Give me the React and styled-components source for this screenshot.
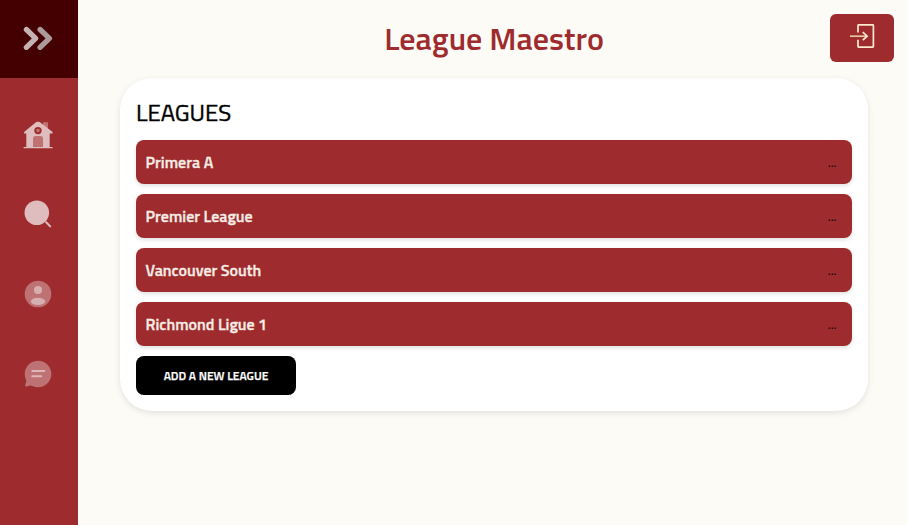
import React from "react";
import styled, { createGlobalStyle } from "styled-components";

const GlobalStyle = createGlobalStyle`
  *, *::before, *::after { box-sizing: border-box; }
  body {
    margin: 0;
    background: #fdfbf6;
    font-family: "Titillium Web", Roboto, "Noto Sans", sans-serif;
  }
  h1, h2, ul { margin: 0; padding: 0; }
  button { font-family: inherit; border: 0; cursor: pointer; }
`;

const Page = styled.div`
  display: flex;
  height: 100vh;
  overflow: hidden;
`;

const Sidebar = styled.aside`
  flex: 0 0 78px;
  display: flex;
  flex-direction: column;
  background: #9e2b2e;
`;

const SidebarToggle = styled.button`
  display: flex;
  height: 78px;
  padding: 22px;
  background: #440000;
`;

const Nav = styled.nav`
  display: flex;
  flex-direction: column;
  gap: 48px;
  padding: 40px 22px 0;
`;

const NavButton = styled.button`
  display: flex;
  width: 32px;
  height: 32px;
  padding: 0;
  background: none;
`;

const Icon = styled.svg`
  display: block;
  flex: none;
  width: ${({ $size = 32 }) => $size}px;
  height: ${({ $size = 32 }) => $size}px;
`;

const Main = styled.main`
  flex: 1;
  min-width: 0;
`;

const Header = styled.header`
  display: grid;
  grid-template-columns: 64px 1fr 64px;
  align-items: center;
  height: 78px;
  padding: 0 13px 2px 16px;
`;

const Title = styled.h1`
  grid-column: 2;
  text-align: center;
  color: #9e2b2e;
  font-size: 32px;
  line-height: 48px;
  font-weight: 600;
`;

const LogoutButton = styled.button`
  display: flex;
  justify-content: center;
  width: 64px;
  height: 48px;
  padding: 8px 0;
  border-radius: 6px;
  background: #9e2b2e;
`;

const Card = styled.section`
  width: 748px;
  height: 333px;
  margin-left: 42px;
  padding: 16px;
  border-radius: 32px;
  background: #fff;
  box-shadow: 0 2px 6px rgba(0, 0, 0, 0.1);
`;

const CardTitle = styled.h2`
  height: 46px;
  color: #000;
  font-size: 24px;
  line-height: 36px;
  font-weight: 400;
  -webkit-text-stroke: 0.4px #000;
`;

const LeagueList = styled.ul`
  display: flex;
  flex-direction: column;
  gap: 10px;
  list-style: none;
`;

const LeagueRow = styled.li`
  display: flex;
  align-items: center;
  justify-content: space-between;
  height: 44px;
  padding: 0 15.6px 0 9.6px;
  border-radius: 8px;
  background: #9e2b2e;
  box-shadow: 0 2px 4px rgba(0, 0, 0, 0.12);
`;

const LeagueName = styled.span`
  color: #f5ece4;
  font-size: 16px;
  line-height: 24px;
  font-weight: 600;
  -webkit-text-stroke: 0.3px #f5ece4;
`;

const MoreButton = styled.button`
  padding: 0;
  background: none;
  color: #000;
  font-size: 13.333px;
  line-height: 20px;
`;

const AddButton = styled.button`
  width: 160px;
  height: 39px;
  margin-top: 10px;
  padding: 0;
  border-radius: 8px;
  background: #000;
  color: #fff;
  font-size: 12px;
  font-weight: 600;
  -webkit-text-stroke: 0.25px #fff;
`;

const ChevronsIcon = () => (
  <Icon viewBox="22 22 32 32" fill="none" strokeWidth="5.3" strokeLinecap="round" strokeLinejoin="round">
    <path d="M26.4 29.5l9.2 8.9-9.2 8.9" stroke="#c5b3b3" />
    <path d="M40.1 29.5l9.3 8.9-9.3 8.9" stroke="#ad9a9a" />
  </Icon>
);

const HomeIcon = () => (
  <Icon viewBox="22 118 32 32">
    <path d="M43 122.2h5v7l-5-4z" fill="#be7274" />
    <path
      d="M24.1 132.1l10.6-8.9q3.3-2.7 6.6 0l11.3 8.9v1.5h-2.9V147H52.6v1.2H23.6V147h2.7v-13.4h-2.2z"
      fill="#dfbcbe"
    />
    <circle cx="38" cy="130.6" r="3.7" fill="#9e2b2e" />
    <circle cx="38" cy="130.6" r="1.8" fill="#be7274" />
    <path d="M33 147v-8.2q0-2.8 2.8-2.8h4.4q2.8 0 2.8 2.8v8.2z" fill="#be7274" />
  </Icon>
);

const SearchIcon = () => (
  <Icon viewBox="22 198 32 32">
    <circle cx="36.8" cy="212.8" r="12.3" fill="#dfbcbe" />
    <path d="M46.2 222.2l4 4.2" stroke="#dfbcbe" strokeWidth="2" strokeLinecap="round" />
  </Icon>
);

const UserIcon = () => (
  <Icon viewBox="22 278 32 32">
    <circle cx="38" cy="294" r="13.3" fill="#be7274" />
    <circle cx="38" cy="290" r="4" fill="#d8afb0" />
    <ellipse cx="38" cy="301.4" rx="7.1" ry="3.7" fill="#d8afb0" />
  </Icon>
);

const ChatIcon = () => (
  <Icon viewBox="22 358 32 32">
    <path
      d="M38 360.7a13.3 13.3 0 1 1-5.7 25.3q-1.4-.6-2.6-.3l-2.8.8c-1.2.3-2.1-.6-1.7-1.7l.9-2.8q.4-1.4-.2-2.5A13.3 13.3 0 0 1 38 360.7z"
      fill="#be7274"
    />
    <path d="M32.3 371h12.1M32.3 376.2h9" stroke="#dfb5b7" strokeWidth="2" strokeLinecap="round" />
  </Icon>
);

const LogoutIcon = () => (
  <Icon $size={28} viewBox="848 22 28 28" fill="none" strokeWidth="1.7">
    <path d="M858 32.4v-7q0-.6.6-.6h14.2q.6 0 .6.6v21.2q0 .6-.6.6h-14.2q-.6 0-.6-.6v-6.8" stroke="#fcecc8" />
    <path d="M850 36.2h17" stroke="#e4c6a2" />
    <path d="M862.8 32.2l4.3 4-4.3 4" stroke="#fcecc8" />
  </Icon>
);

const navItems = [
  { label: "Home", Glyph: HomeIcon },
  { label: "Search", Glyph: SearchIcon },
  { label: "Profile", Glyph: UserIcon },
  { label: "Messages", Glyph: ChatIcon },
];

const leagues = ["Primera A", "Premier League", "Vancouver South", "Richmond Ligue 1"];

export default function App() {
  return (
    <>
      <GlobalStyle />
      <Page>
        <Sidebar>
          <SidebarToggle aria-label="Expand menu">
            <ChevronsIcon />
          </SidebarToggle>
          <Nav>
            {navItems.map(({ label, Glyph }) => (
              <NavButton key={label} aria-label={label}>
                <Glyph />
              </NavButton>
            ))}
          </Nav>
        </Sidebar>
        <Main>
          <Header>
            <Title>League Maestro</Title>
            <LogoutButton aria-label="Log out">
              <LogoutIcon />
            </LogoutButton>
          </Header>
          <Card>
            <CardTitle>LEAGUES</CardTitle>
            <LeagueList>
              {leagues.map((name) => (
                <LeagueRow key={name}>
                  <LeagueName>{name}</LeagueName>
                  <MoreButton>...</MoreButton>
                </LeagueRow>
              ))}
            </LeagueList>
            <AddButton>ADD A NEW LEAGUE</AddButton>
          </Card>
        </Main>
      </Page>
    </>
  );
}
